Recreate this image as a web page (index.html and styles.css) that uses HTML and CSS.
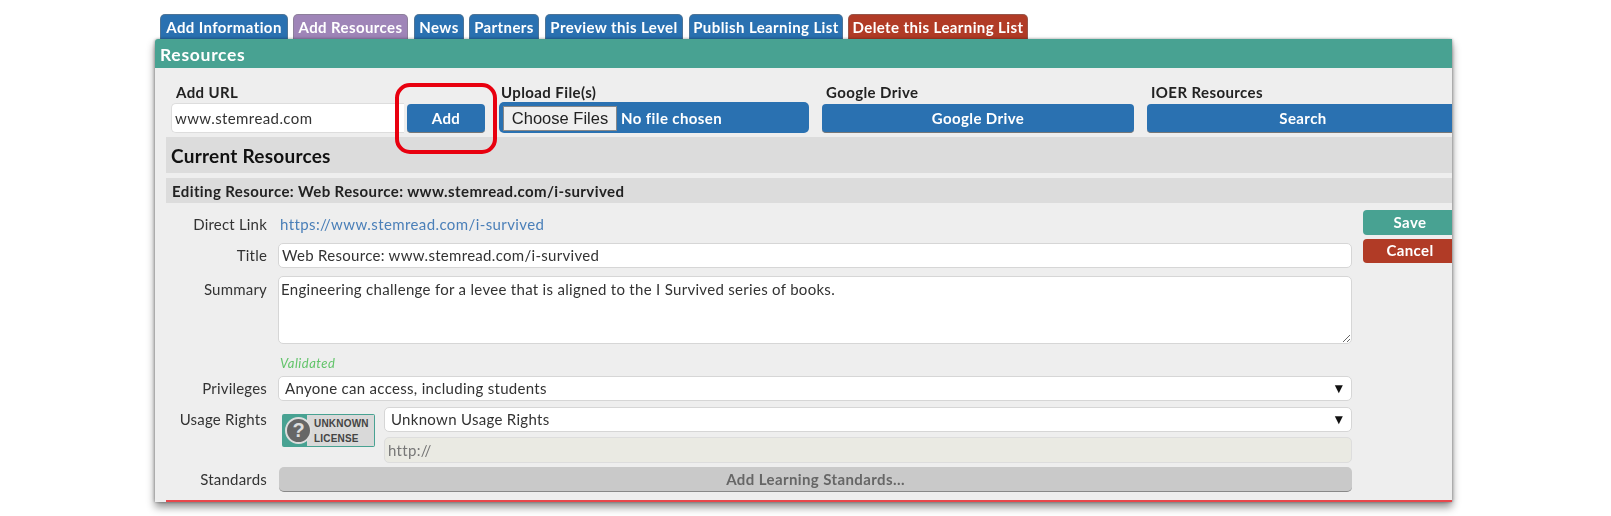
FILE: index.html
```html
<!DOCTYPE html>
<html lang="en">
<head>
<meta charset="utf-8">
<title>Add Resources</title>
<link rel="stylesheet" href="styles.css">
</head>
<body>
<div class="page">
  <nav class="tabs">
    <a class="tab blue">Add Information</a>
    <a class="tab purple">Add Resources</a>
    <a class="tab blue">News</a>
    <a class="tab blue">Partners</a>
    <a class="tab blue">Preview this Level</a>
    <a class="tab blue">Publish Learning List</a>
    <a class="tab red">Delete this Learning List</a>
  </nav>
  <main class="panel">
    <h2 class="panel-title">Resources</h2>
    <section class="sources">
      <div class="source">
        <label class="source-label">Add URL</label>
        <div class="url-row">
          <input class="url-input" type="text" value="www.stemread.com">
          <button class="btn url-add">Add</button>
        </div>
      </div>
      <div class="source">
        <label class="source-label">Upload File(s)</label>
        <div class="upload"><input class="file" type="file" multiple></div>
      </div>
      <div class="source">
        <label class="source-label">Google Drive</label>
        <button class="btn wide">Google Drive</button>
      </div>
      <div class="source">
        <label class="source-label">IOER Resources</label>
        <button class="btn wide">Search</button>
      </div>
    </section>
    <h3 class="current">Current Resources</h3>
    <section class="editor">
      <h4 class="editor-title">Editing Resource: Web Resource: www.stemread.com/i-survived</h4>
      <div class="editor-body">
        <div class="fields">
          <div class="row row-link">
            <span class="lbl">Direct Link</span>
            <a class="direct">https://www.stemread.com/i-survived</a>
          </div>
          <div class="row row-title">
            <span class="lbl">Title</span>
            <input class="ctl" type="text" value="Web Resource: www.stemread.com/i-survived">
          </div>
          <div class="row row-summary">
            <span class="lbl">Summary</span>
            <textarea class="ctl area">Engineering challenge for a levee that is aligned to the I Survived series of books.</textarea>
          </div>
          <div class="row row-valid">
            <span class="lbl"></span>
            <em class="valid">Validated</em>
          </div>
          <div class="row row-priv">
            <span class="lbl">Privileges</span>
            <div class="ctl pick"><span>Anyone can access, including students</span><span class="arrow">&#9660;</span></div>
          </div>
          <div class="row row-usage">
            <span class="lbl">Usage Rights</span>
            <div class="badge">
              <span class="badge-q">?</span>
              <span class="badge-txt"><span>UNKNOWN</span><span>LICENSE</span></span>
            </div>
            <div class="usage-ctls">
              <div class="ctl pick"><span>Unknown Usage Rights</span><span class="arrow">&#9660;</span></div>
              <input class="ctl http" type="text" placeholder="http://" disabled>
            </div>
          </div>
          <div class="row row-std">
            <span class="lbl">Standards</span>
            <button class="std">Add Learning Standards...</button>
          </div>
        </div>
        <div class="side">
          <button class="side-btn save">Save</button>
          <button class="side-btn cancel">Cancel</button>
        </div>
      </div>
    </section>
    <div class="highlight"></div>
  </main>
</div>
</body>
</html>
```

FILE: styles.css
```css
* { box-sizing: border-box; }
html, body { margin: 0; height: 100%; background: #fff; overflow: hidden; }
body { font-family: "Lato", "Liberation Sans", sans-serif; color: #222; font-size: 15px; letter-spacing: .4px; }
.page { width: 1297px; margin-left: 155px; padding-top: 14px; filter: blur(0.4px); }

.tabs { display: flex; padding-left: 5px; height: 25px; }
.tab { height: 25px; line-height: 25px; text-align: center; color: #fff; font-weight: 700; font-size: 15px; border: 1px solid rgba(120,120,120,.45); border-bottom: 0; border-radius: 5px 5px 0 0; white-space: nowrap; }
.tab.blue { background: #2a71b1; }
.tab.purple { background: #9f85b8; }
.tab.red { background: #b13b26; }
.tab:nth-child(1) { width: 128px; margin-right: 5px; }
.tab:nth-child(2) { width: 115px; margin-right: 6px; }
.tab:nth-child(3) { width: 50px; margin-right: 5px; }
.tab:nth-child(4) { width: 70px; margin-right: 6px; }
.tab:nth-child(5) { width: 138px; margin-right: 6px; }
.tab:nth-child(6) { width: 154px; margin-right: 5px; }
.tab:nth-child(7) { width: 180px; }

.panel { position: relative; height: 463px; background: #eee; box-shadow: 0 5px 8px rgba(0,0,0,.45), -1px 0 3px rgba(0,0,0,.2), 1px 0 3px rgba(0,0,0,.2); overflow: hidden; border-radius: 3px 0 0 0; }
.panel-title { margin: 0; height: 29px; line-height: 31px; padding-left: 5px; background: #48a292; color: #fff; font-size: 17.5px; font-weight: 700; letter-spacing: .7px; }

.sources { display: grid; grid-template-columns: 315px 310px 312px 312px; column-gap: 13px; padding: 13px 0 0 16px; width: 1400px; }
.source { display: flex; flex-direction: column; }
.source-label { height: 22px; line-height: 22px; padding-left: 4px; font-weight: 700; font-size: 15px; color: #222; }
.source:first-child .source-label { padding-left: 5px; }
.source:nth-child(2) .source-label { padding-left: 2px; }
.url-row { display: flex; height: 30px; align-items: flex-end; }
.url-input { width: 233px; height: 30px; border: 1px solid #ddd; border-right: 0; border-radius: 5px 0 0 5px; padding: 0 3px; font: 15px "Lato", sans-serif; letter-spacing: .4px; color: #333; background: #fff; }
.btn { border: 0; border-bottom: 1px solid #777; border-radius: 4px; background: #2a71b1; color: #fff; font: 700 15px "Lato", sans-serif; letter-spacing: .4px; height: 29px; }
.url-add { width: 78px; margin-left: 3px; }
.wide { width: 100%; margin-top: 1px; }
.upload { height: 31px; margin-top: -1px; background: #2a71b1; border-radius: 5px; padding: 4px; }
.file { color: #fff; font: 700 15px "Lato", sans-serif; letter-spacing: .4px; width: 100%; }
.file::file-selector-button { width: 114px; height: 25px; margin-right: 4px; padding: 0; border: 1px solid #888; border-radius: 0; background: #efefef; color: #222; font: 400 16.5px "Liberation Sans", sans-serif; letter-spacing: 0; }

.current { margin: 4px 0 0 11px; height: 36px; line-height: 38px; padding-left: 5px; background: #dcdcdc; font-size: 19px; font-weight: 700; letter-spacing: .25px; color: #111; }
.editor { margin: 5px 0 0 11px; height: 324px; border-bottom: 2px solid #e8474c; }
.editor-title { margin: 0; height: 25px; line-height: 27px; padding-left: 6px; background: #dcdcdc; font-size: 15px; font-weight: 700; color: #222; }
.editor-body { display: flex; align-items: flex-start; }
.fields { width: 1186px; }
.row { display: flex; }
.lbl { width: 101px; margin-right: 11px; flex: none; text-align: right; font-size: 15px; letter-spacing: .2px; color: #333; }
.ctl { width: 1074px; border: 1px solid #d6d6d6; border-radius: 5px; background: #fff; font: 15px "Lato", sans-serif; letter-spacing: .3px; color: #333; }

.row-link { height: 28px; margin-top: 12px; line-height: 18px; }
.direct { color: #4a7fb8; font-size: 15px; margin-left: 2px; }
.row-title { margin-top: 0; height: 25px; line-height: 24px; }
.row-title .ctl { height: 25px; padding: 0 3px 2px; }
.row-summary { margin-top: 8px; height: 68px; line-height: 26px; }
.area { height: 68px; padding: 2px; line-height: 20px; resize: vertical; display: block; }
.row-valid { height: 31px; align-items: center; padding-top: 6px; }
.valid { margin-left: 2px; color: #62c46a; font-size: 13px; letter-spacing: .5px; }
.row-priv { height: 25px; line-height: 25px; margin-top: 1px; }
.pick { height: 25px; line-height: 22px; display: flex; justify-content: space-between; padding: 0 6px; }
.arrow { font: 10.5px "DejaVu Sans", sans-serif; line-height: 23px; color: #111; padding-right: 2px; }
.row-usage { margin-top: 6px; height: 56px; line-height: 25px; }
.badge { width: 93px; height: 33px; margin: 7px 9px 0 4px; flex: none; background: #48a292; border-radius: 2px; padding: 1px; display: flex; position: relative; }
.badge-q { position: absolute; left: 3px; top: 3px; width: 27px; height: 27px; border-radius: 50%; background: #666; border: 2px solid #ddd; color: #ddd; font: 700 20px/23px "Liberation Sans", sans-serif; letter-spacing: 0; text-align: center; }
.badge-txt { margin-left: 24px; flex: 1; background: #d9d9d9; display: flex; flex-direction: column; padding: 1px 0 0 7px; font: 700 10px/15px "Liberation Sans", sans-serif; letter-spacing: .2px; color: #444; }
.usage-ctls { width: 968px; }
.usage-ctls .ctl { width: 968px; }
.http { display: block; height: 26px; margin-top: 5px; padding: 0 3px; background: #eaeae3; border-color: #ddd; }
.http::placeholder { color: #777; }
.row-std { margin-top: 4px; height: 25px; line-height: 25px; }
.std { width: 1074px; height: 25px; margin-left: 1px; border: 0; border-bottom: 1px solid #888; border-radius: 5px; background: #c9c9c9; color: #666; font: 700 15px "Lato", sans-serif; letter-spacing: .4px; padding: 0; }

.side { flex: none; margin: 7px 0 0 11px; width: 100px; display: flex; flex-direction: column; gap: 4px; }
.side-btn { height: 25px; border: 0; border-radius: 4px; color: #fff; font: 700 15px "Lato", sans-serif; letter-spacing: .4px; width: 100%; padding: 0 6px 2px 0; text-align: center; }
.side-btn.save { background: #48a292; }
.side-btn.cancel { background: #b13b26; height: 24px; }

.highlight { position: absolute; left: 240px; top: 44px; width: 102px; height: 71px; border: 4px solid #e8000f; border-radius: 15px; }
```
